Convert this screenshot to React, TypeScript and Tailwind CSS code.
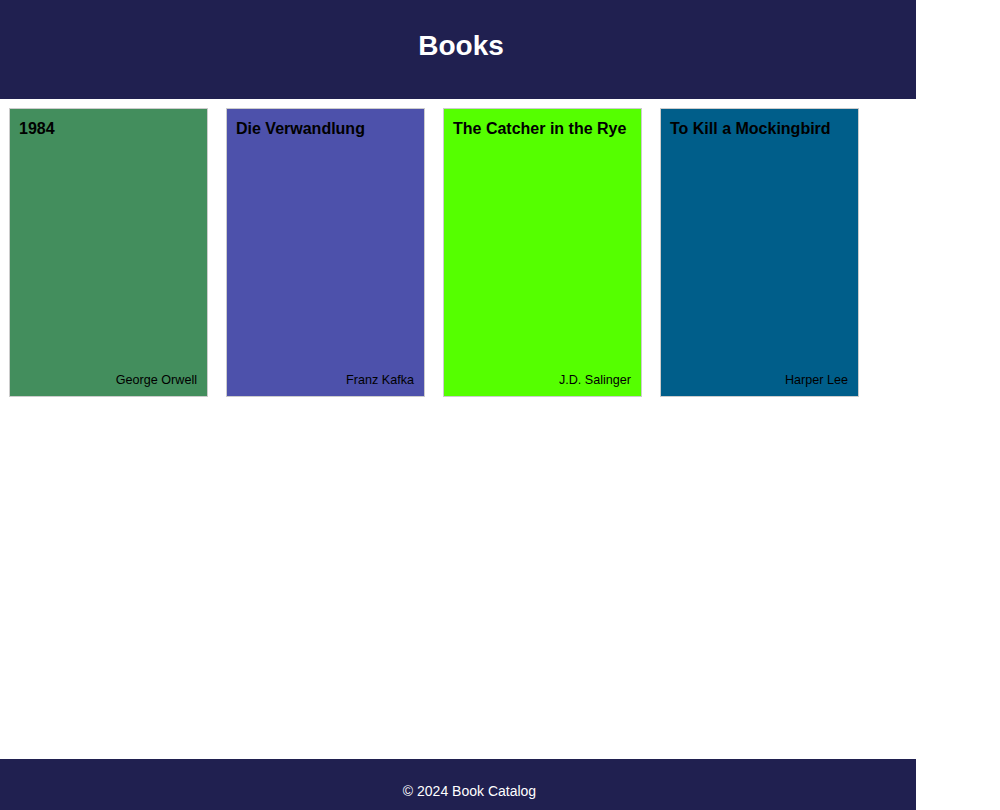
const books = [
  { title: '1984', author: 'George Orwell', color: 'bg-[#438e5d]' },
  { title: 'Die Verwandlung', author: 'Franz Kafka', color: 'bg-[#4d51ab]' },
  { title: 'The Catcher in the Rye', author: 'J.D. Salinger', color: 'bg-[#55ff00]' },
  { title: 'To Kill a Mockingbird', author: 'Harper Lee', color: 'bg-[#005e8a]' },
]

const BookCard = ({ title, author, color }: { title: string; author: string; color: string }) => (
  <div className={`${color} w-[199px] h-[289px] border border-[#cccccc] pt-2 pb-2 pl-[9px] pr-[10px] flex flex-col justify-between text-black`}>
    <h2 className="text-base leading-6 font-bold">{title}</h2>
    <p className="text-[12.6px] leading-[15px] text-right">{author}</p>
  </div>
)

export default function App() {
  return (
    <div className="min-h-screen h-[810px] flex flex-col bg-white font-['Liberation_Sans',Arial,sans-serif]">
      <header className="w-[916px] h-[99px] shrink-0 bg-[#202050] flex justify-center pt-[30px] pl-[6px]">
        <h1 className="text-[28px] leading-[32px] font-bold text-white">Books</h1>
      </header>
      <main className="flex-1 flex items-start gap-[18px] pt-[9px] pl-[9px]">
        {books.map((b) => (
          <BookCard key={b.title} {...b} />
        ))}
      </main>
      <footer className="w-[916px] h-[51px] shrink-0 bg-[#202050] flex justify-center pt-[24px] pl-[23px]">
        <p className="text-sm leading-4 text-white">© 2024 Book Catalog</p>
      </footer>
    </div>
  )
}
